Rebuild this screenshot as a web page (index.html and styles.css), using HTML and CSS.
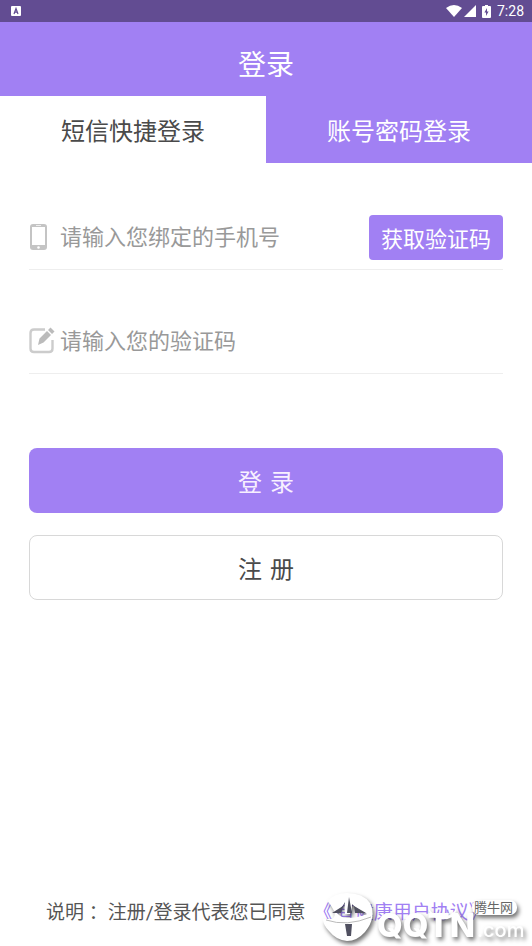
FILE: index.html
```html
<!DOCTYPE html>
<html lang="zh-CN">
<head>
<meta charset="utf-8">
<meta name="viewport" content="width=device-width, initial-scale=1">
<title>登录</title>
<link rel="stylesheet" href="styles.css">
</head>
<body>
<div class="status">
  <svg class="app-mark" width="10" height="10" viewBox="0 0 10 10" aria-hidden="true"><rect width="10" height="10" rx="1" fill="#fff"/><path d="M3 8 5 2.5 7 8M3.7 6.2h2.6" fill="none" stroke="#624c92" stroke-width="1.2"/></svg>
  <svg width="16" height="12" viewBox="0 0 16 12" aria-hidden="true"><path d="M0 3Q8-3 16 3L8 12Z" fill="#fff"/></svg>
  <svg class="signal" width="12" height="12" viewBox="0 0 12 12" aria-hidden="true"><path d="M12 0V12H0Z" fill="#fff"/></svg>
  <svg class="battery" width="9" height="13" viewBox="0 0 9 13" aria-hidden="true"><path d="M3 0h3v1h2q1 0 1 1v10q0 1-1 1H1q-1 0-1-1V2q0-1 1-1h2Z" fill="#fff"/><path d="M5 3 2.4 7.5H4V11l2.6-4.500H5Z" fill="#624c92"/></svg>
  <span>7:28</span>
</div>
<header class="title"><h1>登录</h1></header>
<nav class="tabs">
  <button class="tab active" type="button">短信快捷登录</button>
  <button class="tab" type="button">账号密码登录</button>
</nav>
<main>
  <form class="form">
    <div class="field">
      <label for="phone" aria-label="手机号"><svg width="26" height="28" viewBox="0 0 26 28"><rect x="1" y="1" width="17" height="26" rx="3" fill="#c4c4c4"/><rect x="3" y="4" width="13" height="18" fill="#fff"/><rect x="7" y="2" width="5" height="1" fill="#eee"/><circle cx="9.5" cy="24.500" r="1.3" fill="#fff"/></svg></label>
      <input id="phone" type="tel" placeholder="请输入您绑定的手机号">
      <button class="code" type="button">获取验证码</button>
    </div>
    <div class="field">
      <label for="code" aria-label="验证码"><svg width="26" height="28" viewBox="0 0 26 28"><path d="M16 2.500H5Q1.500 2.500 1.500 6V21.500Q1.500 25 5 25H20Q23.500 25 23.500 21.500V13" fill="none" stroke="#ccc" stroke-width="2.400"/><path d="M9 18 10.500 11.500 18 4 22 8 14.500 15.500ZM19 3 21.500 .5 25.500 4.500 23 7Z" fill="#bbb"/></svg></label>
      <input id="code" type="text" placeholder="请输入您的验证码">
    </div>
    <div class="actions">
      <button class="action primary" type="submit">登&#8196;录</button>
      <button class="action" type="button">注&#8196;册</button>
    </div>
  </form>
</main>
<footer class="terms">
  <p>说明 ：注册/登录代表您已同意<a href="#terms">《&#8198;有健康用户协议》</a></p>
  <svg class="mark" width="214" height="60" viewBox="0 0 214 60" role="img" aria-label="腾牛网 QQTN.com">
    <g class="mark-shape">
      <path fill-rule="evenodd" d="M10 15Q16 7 29 7Q45 7 52 17Q59 31 47 46Q39 55 29 55Q18 54 11 45Q5 39 5 33L14 33Q18 30 16 25Q14 21 10 15ZM18 26Q23 32 29 32Q40 32 49 28Q40 24 34 18Q34 25 32 28H27Q26 22 27 16Q24 22 18 26Z"/>
      <path d="M110 20Q114 31 124 31Q135 31 139 20Q139 26 134 31Q125 36 116 31Q110 27 110 20Z"/>
      <rect x="154" y="14" width="45" height="15" rx="7"/>
      <text class="mark-name" x="59" y="51">QQTN</text>
      <text class="mark-domain" x="159" y="51">.com</text>
    </g>
    <path d="M31 11 34 27H29ZM14 27 25 20 23 27ZM36 20 48 27H37ZM27 38H34L33 50H29Z" fill="#505060"/>
    <path d="M8 34Q29 41 53 31" fill="none" stroke="#bbb" stroke-width="1"/>
    <text class="mark-site" x="156" y="26">腾牛网</text>
  </svg>
</footer>
</body>
</html>
```
FILE: styles.css
```css
* { box-sizing: border-box; }
body { margin: 0; min-height: 100vh; display: flex; flex-direction: column; background: #fff; color: #4a4a4a; font-family: Roboto, "Noto Sans CJK SC", sans-serif; }
button, input { font: inherit; }
.status { height: 22px; padding: 0 8px 0 11px; display: flex; align-items: center; gap: 2px; background: #624c92; color: #fff; font-size: 14px; }
.app-mark { margin-right: auto; }
.battery { margin: 0 4px; }
.title { height: 74px; padding-top: 8px; display: flex; align-items: center; justify-content: center; background: #a180f3; }
h1 { margin: 0; color: #fff; font-size: 28px; font-weight: 400; }
.tabs { display: flex; }
.tab { flex: 1; height: 67px; border: 0; background: #a180f3; color: #fff; font-size: 24px; }
.tab.active { background: #fff; color: #4a4a4a; }
main { flex: 1; padding: 38px 29px; }
.field { height: 69px; margin-bottom: 35px; padding-top: 4px; display: flex; align-items: center; gap: 5px; border-bottom: 1px solid #eee; }
.field label { display: flex; }
.field input { flex: 1; min-width: 0; padding: 0; border: 0; background: none; font-size: 22px; outline: 0; }
.field input::placeholder { color: #999; }
.code { height: 45px; padding: 0 12px; border: 0; border-radius: 4px; background: #a180f3; color: #fff; font-size: 22px; }
.actions { margin-top: 74px; display: grid; gap: 22px; }
.action { height: 65px; border: 1px solid #d8d8d8; border-radius: 8px; background: #fff; color: #4a4a4a; font-size: 24px; }
.action.primary { border: 0; background: #a180f3; color: #f8f0ff; }
.terms { position: relative; padding: 0 46px 22px; color: #555; font-size: 19px; white-space: nowrap; }
.terms p { margin: 0; }
.terms a { margin-left: 8px; color: #a180f3; text-decoration: none; }
.mark { position: absolute; right: 0; bottom: 0; }
.mark-shape { fill: #fff; filter: drop-shadow(2px 3px 2px rgba(0, 0, 0, .55)); }
.mark-name { font: 800 33px Inter, sans-serif; }
.mark-domain { font: 500 20px Inter, sans-serif; }
.mark-site { fill: #666; font: 13px "Noto Sans CJK SC", sans-serif; }
```
